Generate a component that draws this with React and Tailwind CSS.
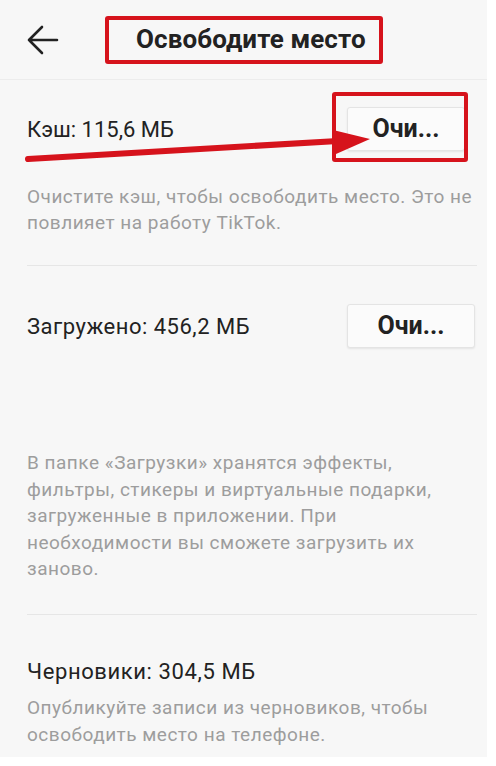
import React from 'react';

const RED = 'border-[#d6131c]';

function ClearButton({ width }) {
  return (
    <button
      className="h-[44px] rounded-[3px] border border-[#e4e4e4] bg-[#fbfbfb] shadow-[0_1px_2px_rgba(0,0,0,0.08)] text-[25px] font-bold text-[#222]"
      style={{ width }}
    >
      Очи...
    </button>
  );
}

export default function App() {
  return (
    <div className="relative w-[496px] min-h-[766px] bg-white font-['Roboto','Noto_Sans',sans-serif]">
      <div className="w-[487px] bg-[#f7f7f7] pb-[9px]">
        {/* Header */}
        <div className="h-[80px] flex items-center pl-[27px] border-b border-[#ececec]">
          <svg width="32" height="30" viewBox="0 0 32 30" className="shrink-0">
            <path d="M30 15H2M15 2L2 15L15 28" fill="none" stroke="#222" strokeWidth="2.6" strokeLinecap="round" strokeLinejoin="round" />
          </svg>
          <div className={`ml-[46px] w-[278px] h-[48px] border-4 ${RED} rounded-[3px] flex items-center pl-[27px]`}>
            <span className="text-[26px] font-bold text-[#222] tracking-[0.1px] whitespace-nowrap">Освободите место</span>
          </div>
        </div>

        {/* Cache */}
        <div className="pl-[27px] pr-[10px]">
          <div className="pt-[27px] pr-[2px] flex items-center justify-between">
            <span className="text-[22px] text-[#222]">Кэш: 115,6 МБ</span>
            <div className="relative mr-[10px]">
              <ClearButton width={118} />
              <div className={`absolute left-[-15px] top-[-15px] w-[136px] h-[70px] border-4 ${RED} rounded-[3px]`} />
            </div>
          </div>
          <p className="mt-[33px] text-[19px] tracking-[0.5px] leading-[26px] text-[#9d9d9d] whitespace-nowrap">
            Очистите кэш, чтобы освободить место. Это не<br />повлияет на работу TikTok.
          </p>
          <div className="mt-[29px] border-b border-[#e6e6e6]" />
        </div>

        {/* Downloads */}
        <div className="pl-[27px] pr-[12px]">
          <div className="pt-[38px] flex items-center justify-between">
            <span className="text-[22px] tracking-[0.5px] text-[#222]">Загружено: 456,2 МБ</span>
            <ClearButton width={128} />
          </div>
          <p className="mt-[102px] text-[19px] tracking-[0.5px] leading-[26.5px] text-[#9d9d9d] whitespace-nowrap">
            В папке «Загрузки» хранятся эффекты,<br />
            фильтры, стикеры и виртуальные подарки,<br />
            загруженные в приложении. При<br />
            необходимости вы сможете загрузить их<br />
            заново.
          </p>
        </div>
        <div className="ml-[27px] mr-[10px] mt-[31px] border-b border-[#e6e6e6]" />

        {/* Drafts */}
        <div className="pl-[27px] pr-[12px]">
          <div className="pt-[43px] text-[22px] tracking-[0.6px] leading-[28px] text-[#222]">Черновики: 304,5 МБ</div>
          <p className="mt-[8px] text-[19px] tracking-[0.5px] leading-[27px] text-[#9d9d9d] whitespace-nowrap">
            Опубликуйте записи из черновиков, чтобы<br />освободить место на телефоне.
          </p>
        </div>
      </div>

      {/* Red annotation arrow */}
      <svg className="absolute left-0 top-0 pointer-events-none" width="496" height="766">
        <path d="M28 159 L338 141" stroke="#d6131c" strokeWidth="6" strokeLinecap="round" />
        <polygon points="333,130 370,139 336,154" fill="#d6131c" />
      </svg>
    </div>
  );
}
